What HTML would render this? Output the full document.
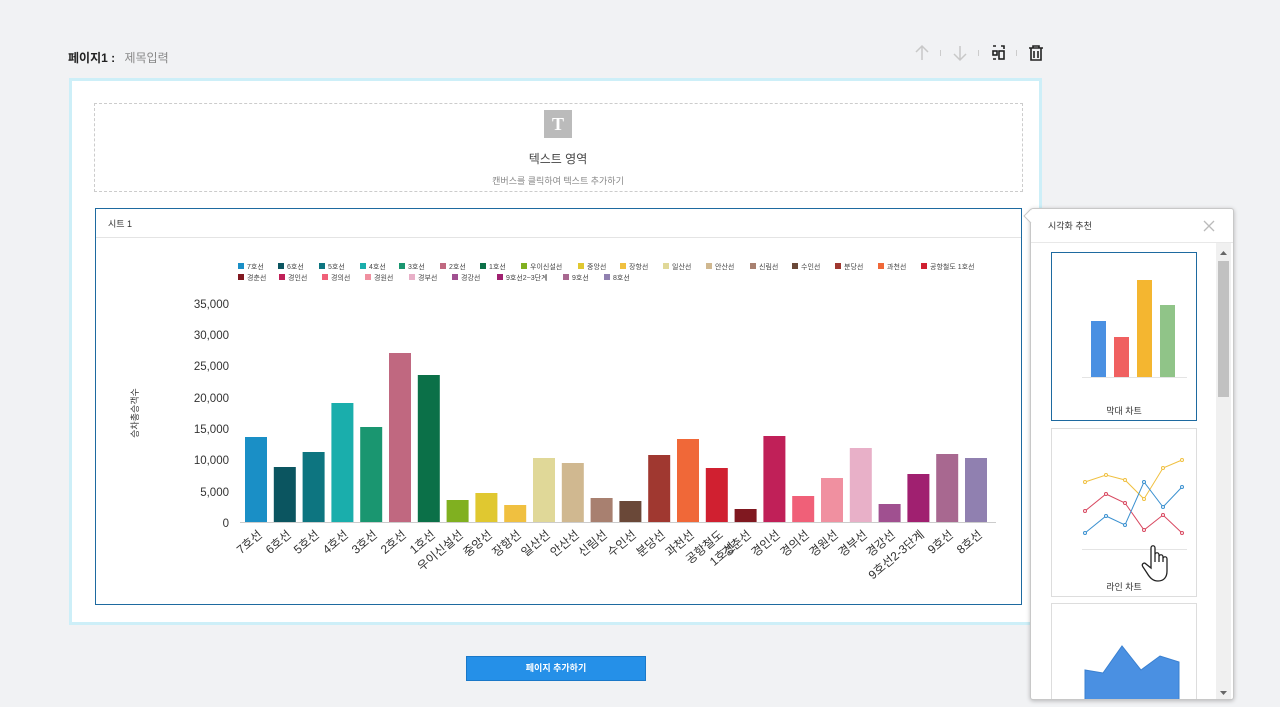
<!DOCTYPE html>
<html><head><meta charset="utf-8"><style>
*{margin:0;padding:0;box-sizing:border-box}
body{width:1280px;height:707px;background:#f1f2f4;font-family:"Liberation Sans","Noto Sans CJK KR",sans-serif;position:relative;overflow:hidden;color:#333}
.abs{position:absolute}
</style></head><body>
<div class="abs" style="left:68px;top:49px;font-size:12px;font-weight:bold;color:#222">페이지1 : <span style="font-weight:normal;color:#888;margin-left:6px">제목입력</span></div>
<svg class="abs" style="left:900px;top:38px" width="150" height="30">
<g stroke="#c8c8c8" stroke-width="1.5" fill="none"><path d="M22 22V8M16 14l6-6 6 6"/><path d="M60 8v14M54 16l6 6 6-6"/></g>
<g fill="#ccc"><rect x="40" y="12" width="1" height="6"/><rect x="78" y="12" width="1" height="6"/><rect x="116" y="12" width="1" height="6"/></g>
<g stroke="#222" stroke-width="1.6" fill="none"><rect x="93" y="13" width="4" height="4"/><rect x="99" y="13" width="5" height="8"/><path d="M93 8h3M101 8h3v3M93 21h3"/></g>
<g stroke="#222" stroke-width="1.6" fill="none"><path d="M129 10h14M133 10V8h6v2M131 10v12h10V10M134 13v7M138 13v7"/></g>
</svg>
<div class="abs" style="left:69px;top:78px;width:973px;height:547px;border:3px solid #cdeff8;background:#fff"></div>
<div class="abs" style="left:94px;top:103px;width:929px;height:89px;border:1px dashed #ccc"></div>
<div class="abs" style="left:544px;top:110px;width:28px;height:28px;background:#bbb;color:#fff;font:bold 18px 'Liberation Serif',serif;text-align:center;line-height:28px">T</div>
<div class="abs" style="left:458px;top:150px;width:200px;text-align:center;font-size:12px;color:#444">텍스트 영역</div>
<div class="abs" style="left:408px;top:174px;width:300px;text-align:center;font-size:9px;color:#888">캔버스를 클릭하여 텍스트 추가하기</div>
<div class="abs" style="left:95px;top:208px;width:927px;height:397px;border:1px solid #1e6aa0;background:#fff"></div>
<div class="abs" style="left:108px;top:217px;font-size:9px;color:#333">시트 1</div>
<div class="abs" style="left:96px;top:237px;width:925px;height:1px;background:#e4e4e4"></div>
<svg class="abs" style="left:0;top:0" width="1030" height="707" font-family="Liberation Sans,Noto Sans CJK KR,sans-serif">
<g font-size="7" fill="#444">
<rect x="238" y="263" width="6" height="6" fill="#1a8fc6"/><text x="247" y="269">7호선</text>
<rect x="278" y="263" width="6" height="6" fill="#0b5560"/><text x="287" y="269">6호선</text>
<rect x="319" y="263" width="6" height="6" fill="#0d7580"/><text x="328" y="269">5호선</text>
<rect x="360" y="263" width="6" height="6" fill="#1aaeac"/><text x="369" y="269">4호선</text>
<rect x="399" y="263" width="6" height="6" fill="#1a9670"/><text x="408" y="269">3호선</text>
<rect x="440" y="263" width="6" height="6" fill="#c06880"/><text x="449" y="269">2호선</text>
<rect x="480" y="263" width="6" height="6" fill="#0b7048"/><text x="489" y="269">1호선</text>
<rect x="521" y="263" width="6" height="6" fill="#80b020"/><text x="530" y="269">우이신설선</text>
<rect x="578" y="263" width="6" height="6" fill="#e0c830"/><text x="587" y="269">중앙선</text>
<rect x="620" y="263" width="6" height="6" fill="#f0c040"/><text x="629" y="269">장항선</text>
<rect x="663" y="263" width="6" height="6" fill="#e0d898"/><text x="672" y="269">일산선</text>
<rect x="706" y="263" width="6" height="6" fill="#d0b890"/><text x="715" y="269">안산선</text>
<rect x="750" y="263" width="6" height="6" fill="#a88070"/><text x="759" y="269">신림선</text>
<rect x="792" y="263" width="6" height="6" fill="#6a4838"/><text x="801" y="269">수인선</text>
<rect x="835" y="263" width="6" height="6" fill="#a03830"/><text x="844" y="269">분당선</text>
<rect x="878" y="263" width="6" height="6" fill="#f06838"/><text x="887" y="269">과천선</text>
<rect x="921" y="263" width="6" height="6" fill="#d02030"/><text x="930" y="269">공항철도 1호선</text>
<rect x="238" y="274" width="6" height="6" fill="#801820"/><text x="247" y="280">경춘선</text>
<rect x="279" y="274" width="6" height="6" fill="#c02058"/><text x="288" y="280">경인선</text>
<rect x="322" y="274" width="6" height="6" fill="#f06078"/><text x="331" y="280">경의선</text>
<rect x="365" y="274" width="6" height="6" fill="#f090a0"/><text x="374" y="280">경원선</text>
<rect x="409" y="274" width="6" height="6" fill="#e8b0c8"/><text x="418" y="280">경부선</text>
<rect x="452" y="274" width="6" height="6" fill="#a05090"/><text x="461" y="280">경강선</text>
<rect x="497" y="274" width="6" height="6" fill="#a02070"/><text x="506" y="280">9호선2~3단계</text>
<rect x="563" y="274" width="6" height="6" fill="#a86890"/><text x="572" y="280">9호선</text>
<rect x="604" y="274" width="6" height="6" fill="#9080b0"/><text x="613" y="280">8호선</text>
</g>
<g font-size="11.5" fill="#333" text-anchor="end">
<text x="229" y="308">35,000</text><text x="229" y="339">30,000</text><text x="229" y="370">25,000</text><text x="229" y="402">20,000</text><text x="229" y="433">15,000</text><text x="229" y="464">10,000</text><text x="229" y="496">5,000</text><text x="229" y="527">0</text>
</g>
<text transform="translate(138,413) rotate(-90)" font-size="9" fill="#333" text-anchor="middle">승차총승객수</text>
<line x1="240" y1="522.5" x2="996" y2="522.5" stroke="#ccc"/>
<g>
<rect x="245" y="437" width="22" height="85" fill="#1a8fc6"/>
<rect x="273.8" y="467" width="22" height="55" fill="#0b5560"/>
<rect x="302.6" y="452" width="22" height="70" fill="#0d7580"/>
<rect x="331.4" y="403" width="22" height="119" fill="#1aaeac"/>
<rect x="360.2" y="427" width="22" height="95" fill="#1a9670"/>
<rect x="389" y="353" width="22" height="169" fill="#c06880"/>
<rect x="417.8" y="375" width="22" height="147" fill="#0b7048"/>
<rect x="446.6" y="500" width="22" height="22" fill="#80b020"/>
<rect x="475.4" y="493" width="22" height="29" fill="#e0c830"/>
<rect x="504.2" y="505" width="22" height="17" fill="#f0c040"/>
<rect x="533" y="458" width="22" height="64" fill="#e0d898"/>
<rect x="561.8" y="463" width="22" height="59" fill="#d0b890"/>
<rect x="590.6" y="498" width="22" height="24" fill="#a88070"/>
<rect x="619.4" y="501" width="22" height="21" fill="#6a4838"/>
<rect x="648.2" y="455" width="22" height="67" fill="#a03830"/>
<rect x="677" y="439" width="22" height="83" fill="#f06838"/>
<rect x="705.8" y="468" width="22" height="54" fill="#d02030"/>
<rect x="734.6" y="509" width="22" height="13" fill="#801820"/>
<rect x="763.4" y="436" width="22" height="86" fill="#c02058"/>
<rect x="792.2" y="496" width="22" height="26" fill="#f06078"/>
<rect x="821" y="478" width="22" height="44" fill="#f090a0"/>
<rect x="849.8" y="448" width="22" height="74" fill="#e8b0c8"/>
<rect x="878.6" y="504" width="22" height="18" fill="#a05090"/>
<rect x="907.4" y="474" width="22" height="48" fill="#a02070"/>
<rect x="936.2" y="454" width="22" height="68" fill="#a86890"/>
<rect x="965" y="458" width="22" height="64" fill="#9080b0"/>
</g>
<g font-size="12" fill="#333" text-anchor="end">
<text transform="translate(263,536) rotate(-40)">7호선</text>
<text transform="translate(292,536) rotate(-40)">6호선</text>
<text transform="translate(320,536) rotate(-40)">5호선</text>
<text transform="translate(349,536) rotate(-40)">4호선</text>
<text transform="translate(378,536) rotate(-40)">3호선</text>
<text transform="translate(407,536) rotate(-40)">2호선</text>
<text transform="translate(436,536) rotate(-40)">1호선</text>
<text transform="translate(464,536) rotate(-40)">우이신설선</text>
<text transform="translate(493,536) rotate(-40)">중앙선</text>
<text transform="translate(522,536) rotate(-40)">장항선</text>
<text transform="translate(551,536) rotate(-40)">일산선</text>
<text transform="translate(580,536) rotate(-40)">안산선</text>
<text transform="translate(608,536) rotate(-40)">신림선</text>
<text transform="translate(637,536) rotate(-40)">수인선</text>
<text transform="translate(666,536) rotate(-40)">분당선</text>
<text transform="translate(695,536) rotate(-40)">과천선</text>
<text transform="translate(724,536) rotate(-40)">공항철도</text>
<text transform="translate(736,548) rotate(-40)">1호선</text>
<text transform="translate(752,536) rotate(-40)">경춘선</text>
<text transform="translate(781,536) rotate(-40)">경인선</text>
<text transform="translate(810,536) rotate(-40)">경의선</text>
<text transform="translate(839,536) rotate(-40)">경원선</text>
<text transform="translate(868,536) rotate(-40)">경부선</text>
<text transform="translate(896,536) rotate(-40)">경강선</text>
<text transform="translate(925,536) rotate(-40)">9호선2-3단계</text>
<text transform="translate(954,536) rotate(-40)">9호선</text>
<text transform="translate(983,536) rotate(-40)">8호선</text>
</g>
</svg>
<div class="abs" style="left:466px;top:656px;width:180px;height:25px;background:#2590e8;border:1px solid #1a78c8;color:#fff;font-size:9px;font-weight:bold;text-align:center;line-height:23px">페이지 추가하기</div>
<svg class="abs" style="left:1022px;top:208px;z-index:2" width="10" height="16"><path d="M9 1L2 8L9 15" fill="#fff" stroke="#c8c8c8"/></svg>
<div class="abs" style="left:1030px;top:208px;width:204px;height:492px;background:#fff;border:1px solid #c8c8c8;border-radius:3px;box-shadow:0 1px 4px rgba(0,0,0,.25);overflow:hidden">
<div class="abs" style="left:17px;top:10px;font-size:9px;color:#333">시각화 추천</div>
<svg class="abs" style="left:171px;top:10px" width="14" height="14"><path d="M2 2l10 10M12 2L2 12" stroke="#bbb" stroke-width="1.3"/></svg>
<div class="abs" style="left:0;top:33px;width:204px;height:1px;background:#e8e8e8"></div>
<div class="abs" style="left:185px;top:34px;width:15px;height:458px;background:#f0f0f0"></div>
<div class="abs" style="left:187px;top:52px;width:11px;height:136px;background:#c1c1c1"></div>
<svg class="abs" style="left:186px;top:38px" width="13" height="452"><path d="M3 8h7L6.5 4z" fill="#666"/><path d="M3 444h7L6.5 448z" fill="#666"/></svg>
<div class="abs" style="left:20px;top:43px;width:146px;height:169px;border:1px solid #1e6aa0">
<svg width="144" height="167"><rect x="39" y="68" width="15" height="56" fill="#4a90e2"/><rect x="62" y="84" width="15" height="40" fill="#f06060"/><rect x="85" y="27" width="15" height="97" fill="#f4b630"/><rect x="108" y="52" width="15" height="72" fill="#90c488"/><line x1="30" y1="124.5" x2="135" y2="124.5" stroke="#e4e4e4"/><text x="72" y="161" font-size="9" text-anchor="middle" fill="#333">막대 차트</text></svg></div>
<div class="abs" style="left:20px;top:219px;width:146px;height:169px;border:1px solid #ddd">
<svg width="144" height="167" fill="#fff" stroke-width="1"><polyline points="33,53 54,46 73,51 92,70 111,39 130,31" stroke="#f0c040" fill="none"/><polyline points="33,82 54,65 73,74 92,101 111,86 130,104" stroke="#d84860" fill="none"/><polyline points="33,104 54,87 73,96 92,53 111,78 130,58" stroke="#3a90d0" fill="none"/><g stroke="#f0c040"><circle cx="33" cy="53" r="1.5"/><circle cx="54" cy="46" r="1.5"/><circle cx="73" cy="51" r="1.5"/><circle cx="92" cy="70" r="1.5"/><circle cx="111" cy="39" r="1.5"/><circle cx="130" cy="31" r="1.5"/></g><g stroke="#d84860"><circle cx="33" cy="82" r="1.5"/><circle cx="54" cy="65" r="1.5"/><circle cx="73" cy="74" r="1.5"/><circle cx="92" cy="101" r="1.5"/><circle cx="111" cy="86" r="1.5"/><circle cx="130" cy="104" r="1.5"/></g><g stroke="#3a90d0"><circle cx="33" cy="104" r="1.5"/><circle cx="54" cy="87" r="1.5"/><circle cx="73" cy="96" r="1.5"/><circle cx="92" cy="53" r="1.5"/><circle cx="111" cy="78" r="1.5"/><circle cx="130" cy="58" r="1.5"/></g><line x1="30" y1="120.5" x2="135" y2="120.5" stroke="#e4e4e4"/><text x="72" y="161" font-size="9" text-anchor="middle" fill="#333" stroke="none">라인 차트</text>
<path d="M99 139v-20c0-3 4-3 4 0v14v-7c0-3 4-3 4 0v7v-5c0-3 4-3 4 0v5v-3c0-3 4-3 4 0v12c0 6-3 10-9 10c-5 0-8-3-11-8l-4-6c-2-3 1-5 3-3z" stroke="#222" stroke-width="1.3" fill="#fff"/></svg></div>
<div class="abs" style="left:20px;top:394px;width:146px;height:110px;border:1px solid #ddd">
<svg width="144" height="110"><path d="M33 66L51 69L70 42L89 66L108 52L127 58V110H33z" fill="#4a90e2" stroke="#3a80d0"/></svg></div>
</div>
</body></html>
